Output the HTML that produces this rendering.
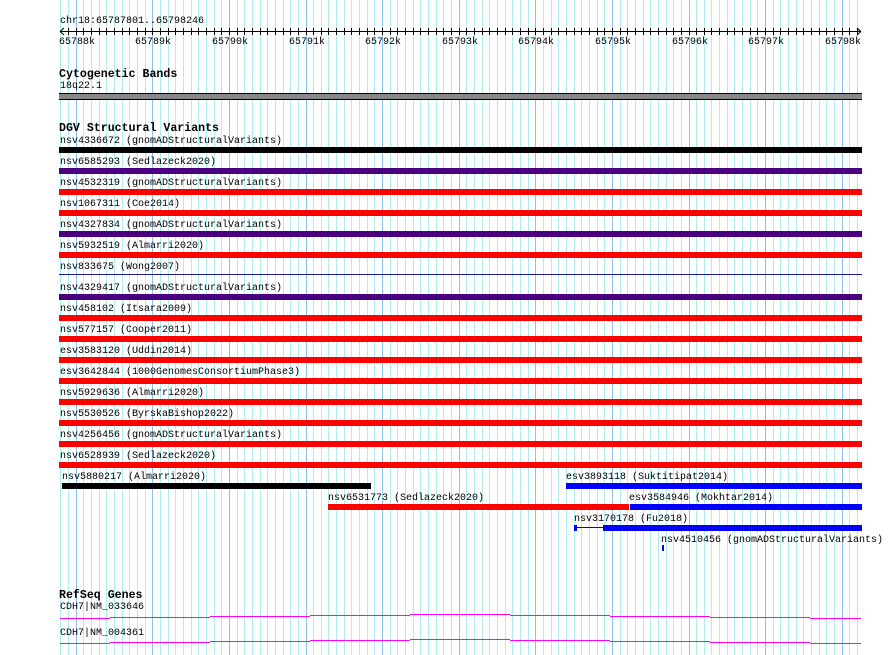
<!DOCTYPE html>
<html><head><meta charset="utf-8">
<style>
html,body{margin:0;padding:0;background:#fff;}
#c{position:relative;width:890px;height:655px;overflow:hidden;font-family:"Liberation Mono","DejaVu Sans Mono",monospace;font-size:10px;color:#000;}
.t{position:absolute;white-space:pre;line-height:11px;}
.h{position:absolute;white-space:pre;font-weight:bold;font-size:11.6px;line-height:12px;}
.b{position:absolute;height:6px;}
svg{position:absolute;left:0;top:0;}
</style></head><body>
<div id="c">
<svg id="g" width="890" height="655"></svg>
<div class="t" style="left:60px;top:16px">chr18:65787801..65798246</div>
<div class="h" style="left:59px;top:69px">Cytogenetic Bands</div>
<div class="t" style="left:60px;top:81px">18q22.1</div>
<div style="position:absolute;left:59px;top:93px;width:803px;height:5px;background:#888;border-top:1px solid #000;border-bottom:1px solid #000;box-sizing:content-box"></div>
<div class="h" style="left:59px;top:123px">DGV Structural Variants</div>
<div class="h" style="left:59px;top:590px">RefSeq Genes</div>
<div class="t" style="left:60px;top:602px">CDH7|NM_033646</div>
<div class="t" style="left:60px;top:628px">CDH7|NM_004361</div>
</div>
<script>
var ns="http://www.w3.org/2000/svg",g=document.getElementById('g');
function L(x1,y1,x2,y2,c,w){var l=document.createElementNS(ns,'line');l.setAttribute('x1',x1);l.setAttribute('y1',y1);l.setAttribute('x2',x2);l.setAttribute('y2',y2);l.setAttribute('stroke',c);l.setAttribute('stroke-width',w||1);g.appendChild(l);}
var s=7.66,x0=75.7;
for(var k=-2;k<=102;k++){var x=Math.round(x0+k*s)+0.5;if(x<59||x>858)continue;var maj=(k%10==0);L(x,0,x,655,maj?'#8ac4ea':'#aeeef0',1);}
L(60,31.5,861,31.5,'#000');
for(var k=-2;k<=102;k++){var x=Math.round(x0+k*s)+0.5;if(x<61||x>858)continue;L(x,28,x,35,'#000');}
L(60,31.5,64,28,'#000');L(60,31.5,64,35,'#000');L(861,31.5,857,28,'#000');L(861,31.5,857,35,'#000');
var c=document.getElementById('c');
function T(x,y,s,cls){var d=document.createElement('div');d.className=cls||'t';d.style.left=x+'px';d.style.top=y+'px';d.textContent=s;c.appendChild(d);return d;}
function B(x1,x2,y,col,h){var d=document.createElement('div');d.className='b';d.style.left=x1+'px';d.style.width=(x2-x1)+'px';d.style.top=y+'px';d.style.background=col;if(h)d.style.height=h+'px';c.appendChild(d);}
for(var i=0;i<=10;i++){var x=Math.round(x0+i*10*s);T(x-17,37,(65788+i)+'k');}
var R='#ff0000',P='#4b0082',K='#000',U='#0000ff';
var rows=[["nsv4336672 (gnomADStructuralVariants)",K],["nsv6585293 (Sedlazeck2020)",P],["nsv4532319 (gnomADStructuralVariants)",R],["nsv1067311 (Coe2014)",R],["nsv4327834 (gnomADStructuralVariants)",P],["nsv5932519 (Almarri2020)",R],["nsv833675 (Wong2007)",'line'],["nsv4329417 (gnomADStructuralVariants)",P],["nsv458102 (Itsara2009)",R],["nsv577157 (Cooper2011)",R],["esv3583120 (Uddin2014)",R],["esv3642844 (1000GenomesConsortiumPhase3)",R],["nsv5929636 (Almarri2020)",R],["nsv5530526 (ByrskaBishop2022)",R],["nsv4256456 (gnomADStructuralVariants)",R],["nsv6528939 (Sedlazeck2020)",R]];
for(var i=0;i<rows.length;i++){var y=135+21*i;T(60,y+1,rows[i][0]);if(rows[i][1]=='line'){B(59,862,274,'#1a1aa0',1);}else B(59,862,y+12,rows[i][1]);}
var y=135+21*16;
T(62,y+1,"nsv5880217 (Almarri2020)");B(62,371,y+12,K);
T(566,y+1,"esv3893118 (Suktitipat2014)");B(566,862,y+12,U);
y+=21;T(328,y+1,"nsv6531773 (Sedlazeck2020)");B(328,629,y+12,R);
T(629,y+1,"esv3584946 (Mokhtar2014)");B(630,862,y+12,U);
y+=21;T(574,y+1,"nsv3170178 (Fu2018)");B(574,577,y+12,U);B(577,603,y+14,U,1);B(603,862,y+12,U);
y+=21;T(661,y+1,"nsv4510456 (gnomADStructuralVariants)");B(662,664,y+11,U);
var seg=[[60,110,618],[110,210,617],[210,310,616],[310,410,615],[410,510,614],[510,610,615],[610,710,616],[710,810,617],[810,861,618]];
for(var j=0;j<2;j++)for(var i=0;i<seg.length;i++){var yy=seg[i][2]+j*25+0.5;L(seg[i][0],yy,seg[i][1],yy,'#ff00ff');}
</script>
</body></html>
